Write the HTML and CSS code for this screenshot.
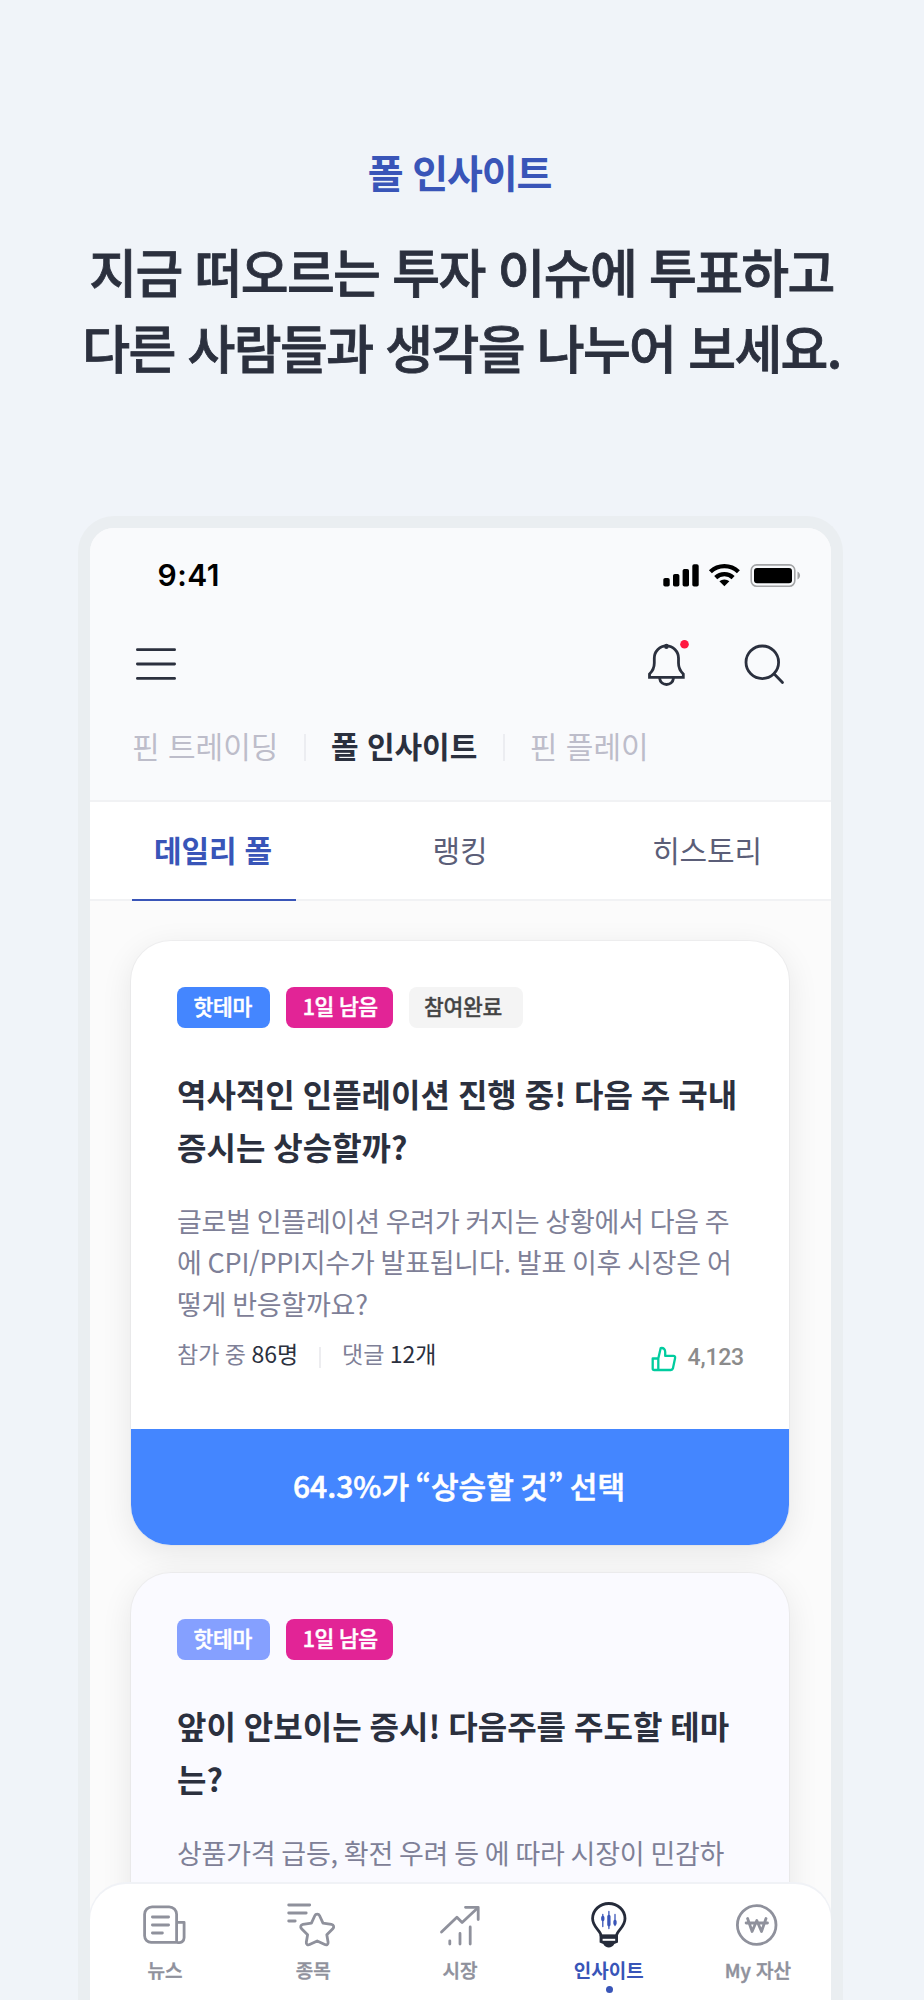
FILE: index.html
```html
<!DOCTYPE html>
<html lang="ko">
<head>
<meta charset="utf-8">
<title>폴 인사이트</title>
<link rel="stylesheet" href="styles.css">
</head>
<body>
<header class="hero">
  <p class="hero-label">폴 인사이트</p>
  <h1 class="hero-title"><span class="hero-line">지금 떠오르는 투자 이슈에 투표하고</span><span class="hero-line">다른 사람들과 생각을 나누어 보세요.</span></h1>
</header>
<main class="phone">
  <div class="top">
    <div class="status">
      <span class="time">9:41</span>
      <svg class="status-icons" viewBox="660 560 144 30">
        <rect x="663.300" y="578" width="6.400" height="8.500" rx="1.800"/><rect x="673" y="574" width="6.400" height="12.500" rx="1.800"/><rect x="682.600" y="569" width="6.400" height="17.500" rx="1.800"/><rect x="692.300" y="564.300" width="6.400" height="22.200" rx="1.800"/>
        <g fill="none" stroke="#000" stroke-width="4.300"><path d="M710.400 571.700a20.300 20.300 0 0 1 28 0"/><path d="M715.700 577.600a12.400 12.400 0 0 1 17.400 0"/></g>
        <path d="M724.400 586.200l-5-4.900a7.500 7.500 0 0 1 10 0z"/>
        <rect x="751.200" y="564.900" width="43.600" height="21.400" rx="5.500" fill="none" stroke="#a3a4a6" stroke-width="1.600"/>
        <rect x="754" y="568" width="38" height="15.200" rx="3"/>
        <path d="M797.500 571.500c3.400 1.400 3.400 6.600 0 8z" fill="#a3a4a6"/>
      </svg>
    </div>
    <div class="toolbar">
      <svg class="icon menu" viewBox="134 642 44 44"><path d="M137.400 649.700h37.200M137.400 664h37.200M137.400 678.400h37.200"/></svg>
      <svg class="icon bell" viewBox="642 636 54 54"><path stroke-linejoin="miter" d="M649.500 676.300v-3.300c2.800-2.600 4.800-5.600 4.800-11v-5a12.100 12.100 0 0 1 24.200 0v5c0 5.400 2 8.400 4.800 11v3.300z"/><path d="M659.700 677.500c.8 8 12.900 8 13.700 0"/><path d="M666.400 645.700v-.8" stroke-width="4.500"/><circle class="alert" cx="684.500" cy="643.300" r="4.300"/></svg>
      <svg class="icon search" viewBox="738 636 54 54"><circle cx="762.300" cy="661.300" r="16.300"/><path d="M774.500 673.300l8 8.200"/></svg>
    </div>
    <nav class="sections"><span>핀 트레이딩</span><i></i><b>폴 인사이트</b><i></i><span>핀 플레이</span></nav>
  </div>
  <nav class="tabs"><span class="tab tab-on">데일리 폴</span><span class="tab">랭킹</span><span class="tab">히스토리</span></nav>
  <div class="feed">
    <article class="card">
      <div class="card-body">
        <div class="tags"><span class="tag tag-hot">핫테마</span><span class="tag tag-left">1일 남음</span><span class="tag tag-done">참여완료</span></div>
        <h2>역사적인 인플레이션 진행 중! 다음 주 국내<br>증시는 상승할까?</h2>
        <p class="desc">글로벌 인플레이션 우려가 커지는 상황에서 다음 주<br>에 CPI/PPI지수가 발표됩니다. 발표 이후 시장은 어<br>떻게 반응할까요?</p>
        <div class="meta"><span>참가 중 <em>86명</em></span><i></i><span>댓글 <em>12개</em></span>
          <span class="likes"><svg viewBox="649 1345 30 28"><path d="M652.700 1358.500h5.600v11.500h-4.100a1.500 1.500 0 0 1-1.500-1.500zM658.300 1358.500l2.400-10.400c3-.6 4.500 1.300 4.500 3.800v4h8.200c1.300 0 1.900.9 1.700 2.200l-2.200 10.300c-.3 1.100-1 1.600-2 1.600h-12.600"/></svg>4,123</span></div>
      </div>
      <div class="result">64.3%가 “상승할 것” 선택</div>
    </article>
    <article class="card card-next">
      <div class="card-body">
        <div class="tags"><span class="tag tag-hot">핫테마</span><span class="tag tag-left">1일 남음</span></div>
        <h2>앞이 안보이는 증시! 다음주를 주도할 테마<br>는?</h2>
        <p class="desc">상품가격 급등, 확전 우려 등 에 따라 시장이 민감하</p>
      </div>
    </article>
  </div>
  <nav class="bottom">
    <a class="item"><svg viewBox="134.100 1900 60 50"><path d="M177.200 1942.300h-26a6.500 6.500 0 0 1-6.500-6.500v-21.500a7.500 7.500 0 0 1 7.500-7.500h17a7.500 7.500 0 0 1 7.500 7.500v26a2 2 0 0 0 .5 2c4 1.200 7-1.200 7-4.500v-15.500h-7.200"/><path d="M152.500 1917h16.200M152.500 1925h16.200M152.500 1933h10"/></svg><span>뉴스</span></a>
    <a class="item"><svg viewBox="282.300 1900 60 50"><path d="M289 1905h21M289 1913h17.500M289 1921h6.500"/><path d="M315.200 1915.500c.8-1.800 3.800-1.800 4.600 0l3.500 7.600 8.500 1.300c2.300.4 2.900 2.700 1.300 4.300l-6 6 1.300 7.600c.3 2-1.500 3.200-3.300 2.300l-7.600-3.700-7.600 3.700c-1.800.9-3.600-.3-3.300-2.300l1.300-7.600-6-6c-1.600-1.600-1-3.900 1.300-4.300l8.500-1.300z"/></svg><span>종목</span></a>
    <a class="item"><svg viewBox="430.500 1900 60 50"><path d="M442 1932l15.400-14.800 5.200 5.300 15.500-14.500"/><path d="M466 1907.300h12.700v12.200M450.300 1940.800v3.200M460.500 1933.500v10.500M470.700 1927v17"/></svg><span class="flush">시장</span></a>
    <a class="item item-on"><svg viewBox="578.700 1900 60 50"><path class="bulb" d="M600.800 1936c0-5.500-8.500-8.300-8.500-17.500a16.200 15 0 0 1 32.400 0c0 9.200-8.500 12-8.500 17.500z"/><path class="bulb-base" d="M599.300 1934.800h18.400v7.800l-3.700 1.400c-2 4.600-9 4.600-11 0l-3.700-1.400z"/><path class="bulb-gap" d="M602.300 1939.800h12.600"/><g class="candles"><path d="M602.500 1914.500v12M608.600 1911.500v17M614.700 1914.500v11"/><path d="M602.500 1917.500v2M608.600 1916.300v8.500M614.700 1921.500v2" stroke-width="3.300"/></g></svg><span>인사이트</span><i class="dot"></i></a>
    <a class="item"><svg viewBox="726.900 1900 60 50"><circle cx="756.600" cy="1925" r="19.300"/><path d="M747.500 1918.500l4.500 13 4.700-11 4.700 11 4.500-13M746 1923h21.400" stroke-width="2.800"/></svg><span>My 자산</span></a>
  </nav>
</main>
</body>
</html>
```

FILE: styles.css
```css
* { box-sizing: border-box; }
body { margin: 0; width: 924px; height: 2000px; overflow: hidden; background: #f0f4f9; color: #2b303e; font-family: "Noto Sans CJK KR", sans-serif; display: flex; flex-direction: column; }
p, h1, h2 { margin: 0; }
svg { display: block; }
.hero { height: 516px; flex: none; padding-top: 143px; text-align: center; white-space: nowrap; }
.hero-label { font-size: 39px; line-height: 56px; font-weight: 700; color: #3955b8; letter-spacing: -1.1px; margin-bottom: 34px; padding-right: 5px; }
.hero-title { font-size: 52px; line-height: 76px; font-weight: 500; letter-spacing: -1.65px; padding-right: 1px; -webkit-text-stroke: .8px currentColor; }
.hero-line { display: block; }
.phone { flex: none; width: 765px; height: 1484px; margin-left: 78px; border: 12px solid #eaeef1; border-bottom: 0; border-radius: 36px 36px 0 0; background: #fbfbfb; overflow: hidden; position: relative; }
.top { height: 274px; background: #f9fafc; border-bottom: 2px solid #f1f2f4; }
.status { height: 94px; display: flex; align-items: center; justify-content: space-between; padding: 0 27px 0 67.5px; }
.time { font: 600 30px/30px Inter, sans-serif; color: #000; letter-spacing: .5px; }
.status-icons { width: 144px; height: 30px; }
.toolbar { height: 84px; padding: 0 39px 0 44px; display: flex; align-items: center; }
.icon { fill: none; stroke: #2b303e; stroke-width: 2.8; stroke-linecap: round; stroke-linejoin: round; }
.menu { width: 44px; height: 44px; margin-right: auto; }
.bell, .search { width: 54px; height: 54px; }
.search { margin-left: 42px; }
.alert { fill: #ff173f; stroke: none; }
.sections { height: 78px; padding-left: 42px; display: flex; align-items: center; font-size: 30px; color: #bdbdca; white-space: nowrap; }
.sections i { width: 2px; height: 27px; background: #ecedf1; margin: 5px 24.5px 0 26px; }
.sections b { color: #2b303e; font-weight: 700; }
.tabs { height: 99px; background: #fff; border-bottom: 2px solid #f1f2f4; display: grid; grid-template-columns: repeat(3, 1fr); font-size: 30px; color: #5b5e78; }
.tab { height: 99px; line-height: 95px; text-align: center; width: 164px; justify-self: center; letter-spacing: -.2px; padding-right: 1px; }
.tab-on { color: #3955b8; font-weight: 700; border-bottom: 2px solid #3955b8; }
.feed { padding: 40px 42px 0 41px; display: flex; flex-direction: column; gap: 28px; }
.card { height: 604px; flex: none; background: #fff; border-radius: 40px; overflow: hidden; box-shadow: 0 0 0 1px rgba(40, 45, 70, .04), 0 8px 32px rgba(0, 0, 0, .085); }
.card-next { background: #fafaff; }
.card-body { height: 488px; padding: 46px 45px 0 45.5px; }
.tags { display: flex; gap: 16.3px; }
.tag { height: 41px; line-height: 38px; padding: 0 17px; border-radius: 8px; font-size: 21.5px; font-weight: 500; color: #fff; white-space: nowrap; letter-spacing: -.3px; -webkit-text-stroke: .5px currentColor; }
.tag-hot { background: #4486ff; width: 93px; }
.tag-left { background: #e22496; width: 107px; letter-spacing: -.6px; }
.tag-done { background: #f4f4f4; color: #444; width: 114px; padding: 0 15px; -webkit-text-stroke-width: .3px; }
.card-next .tag-hot { background: #85a0ff; }
h2 { margin-top: 38.5px; padding-left: .5px; font-size: 32px; line-height: 53.5px; font-weight: 700; white-space: nowrap; word-spacing: -1px; }
.desc { margin-top: 26px; padding-left: .5px; font-size: 27px; line-height: 41.5px; color: #7e8097; letter-spacing: -.25px; word-spacing: -1.3px; white-space: nowrap; }
.meta { margin-top: 8.5px; height: 40px; padding-left: .5px; display: flex; align-items: center; font-size: 23px; color: #7e8097; white-space: nowrap; word-spacing: -1px; }
.meta em { font-style: normal; color: #2b303e; }
.meta i { width: 2px; height: 21px; background: #ededf0; margin: 10px 21px 0; }
.likes { margin-left: auto; display: flex; align-items: center; gap: 9px; font: 500 23px/30px Roboto, sans-serif; color: #8b8b8b; padding-top: 10px; letter-spacing: -.2px; }
.likes svg { width: 30px; height: 28px; margin-top: 3px; fill: none; stroke: #00cc9f; stroke-width: 2.3; stroke-linejoin: round; }
.result { height: 116px; background: #4486ff; color: #fff; text-align: center; font-size: 30px; line-height: 113px; padding-right: 2px; font-weight: 500; word-spacing: -2px; -webkit-text-stroke: .6px currentColor; }
.bottom { position: absolute; left: 0; right: 0; bottom: 0; height: 116px; background: #fff; border-radius: 36px 36px 0 0; box-shadow: 0 -1px 0 1px #f0f2f6; display: grid; grid-template-columns: repeat(5, 1fr); }
.item { padding-top: 16px; display: flex; flex-direction: column; align-items: center; font-size: 19px; line-height: 40px; font-weight: 500; color: #8f919c; position: relative; white-space: nowrap; }
.item span { padding-left: 2px; -webkit-text-stroke: .5px currentColor; }
.item .flush { padding-left: 0; padding-right: 1px; }
.item svg { width: 60px; height: 50px; fill: none; stroke: #8f919c; stroke-width: 2.8; stroke-linecap: round; stroke-linejoin: round; }
.item-on { color: #3955b8; font-weight: 700; }
.item-on span { padding-left: 0; -webkit-text-stroke-width: 0; }
.item .bulb { stroke: #252b3a; stroke-width: 2.8; }
.item .bulb-base { fill: #252b3a; stroke: none; }
.item .bulb-gap { stroke: #fff; stroke-width: 2; stroke-linecap: butt; }
.item .candles { stroke: #3955b8; stroke-width: 1.3; }
.dot { position: absolute; bottom: 7px; margin-left: 1px; width: 7px; height: 7px; border-radius: 50%; background: #3955b8; }
```
